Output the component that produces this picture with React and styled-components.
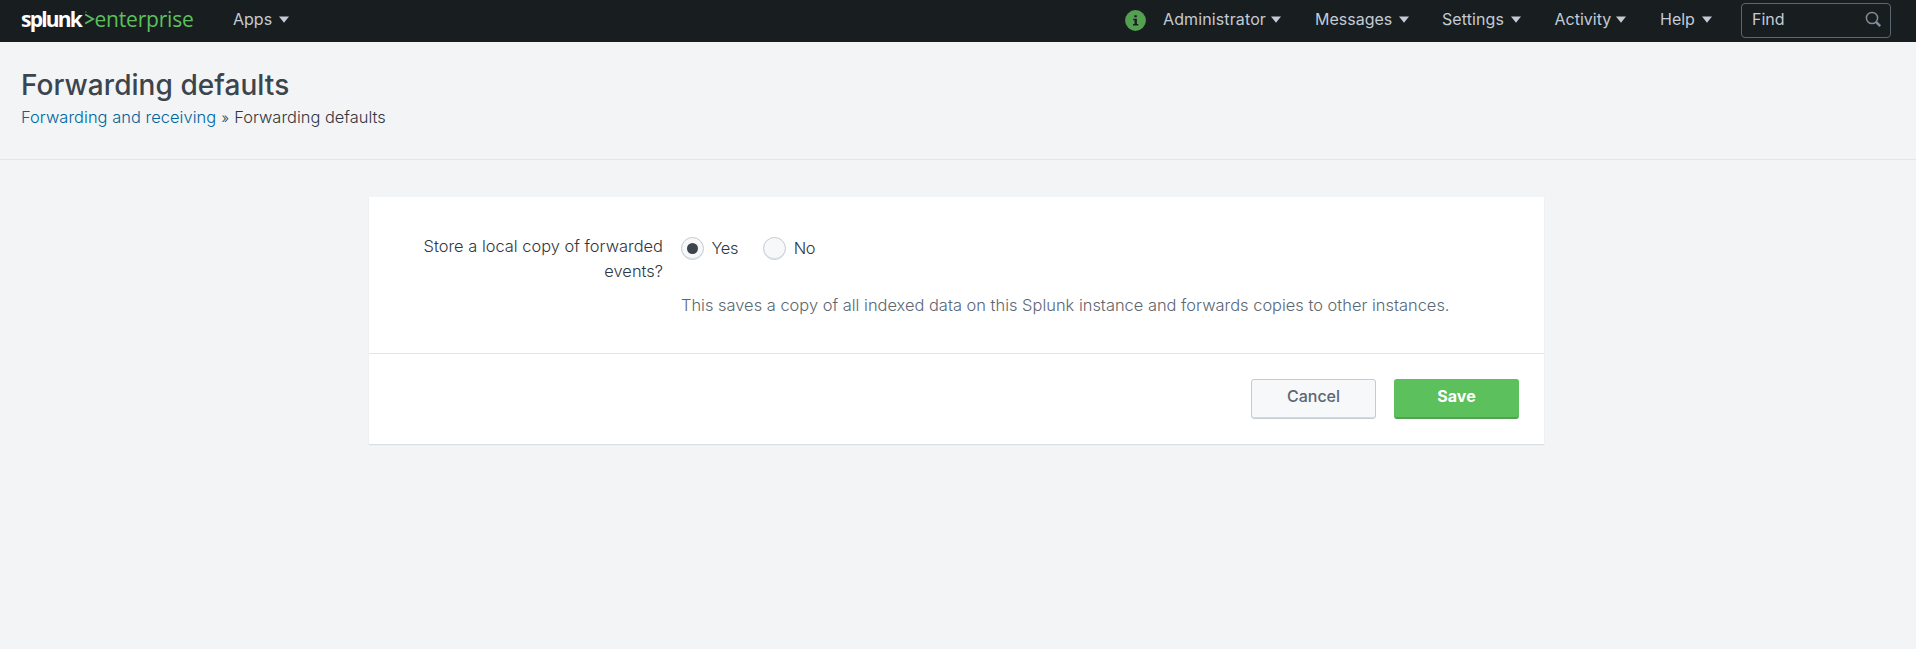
import React, { useState } from "react";
import styled, { createGlobalStyle, css } from "styled-components";

const GlobalStyle = createGlobalStyle`
  * { box-sizing: border-box; }
  body {
    margin: 0;
    background: #f2f4f5;
    color: #30373f;
    font-family: Inter, "Liberation Sans", sans-serif;
    font-size: 16.4px;
    font-weight: 300;
    letter-spacing: 0.02px;
  }
`;

const Page = styled.div`
  min-height: 100vh;
  display: flex;
  flex-direction: column;
`;

const NavBar = styled.header`
  display: flex;
  height: 42px;
  padding: 0 25px 0 21px;
  background: #181d20;
  color: #c3cbd4;
`;

const Logo = styled.div`
  display: flex;
  width: 212px;
  padding-top: 6px;
  font: 400 21px/26px "Open Sans", "Liberation Sans", sans-serif;
`;

const LogoName = styled.span`
  width: 62.5px;
  color: #fff;
  font-weight: 700;
  letter-spacing: -1.8px;
`;

const LogoChevron = styled.svg`
  flex: none;
  width: 11px;
  height: 20px;
`;

const LogoProduct = styled.span`
  color: #5cc05c;
  letter-spacing: -0.2px;
`;

const Menu = styled.a`
  display: flex;
  align-items: flex-start;
  width: ${(p) => p.$width}px;
  padding-top: 9px;
  font-size: 16px;
  font-weight: 400;
  line-height: 21px;
  cursor: pointer;
`;

const MenuLabel = styled.span`
  width: ${(p) => p.$width}px;
  letter-spacing: ${(p) => p.$spacing || 0}px;
  white-space: nowrap;
`;

const Caret = styled.svg`
  width: 10px;
  height: 7px;
  margin-top: 6.5px;
  fill: #c3cbd4;
`;

const NavRight = styled.nav`
  display: flex;
  margin-left: auto;
`;

const InfoIcon = styled.svg`
  width: 21px;
  height: 21px;
  margin: 9.5px 17.5px 0 0;
`;

const FindBox = styled.label`
  display: flex;
  width: 150px;
  height: 35px;
  margin-top: 3px;
  padding: 5px 8px 0 10px;
  border: 1px solid #5c6773;
  border-radius: 4px;
  font-size: 16px;
  font-weight: 400;
  line-height: 21px;
`;

const FindText = styled.span`
  flex: 1;
`;

const SearchIcon = styled.svg`
  width: 17px;
  height: 17px;
  margin-top: 2px;
`;

const TitleBar = styled.section`
  height: 118px;
  padding: 25px 21px 0;
  border-bottom: 1px solid #e1e6eb;
`;

const Title = styled.h1`
  margin: 0;
  color: #3c444d;
  font-size: 28px;
  font-weight: 500;
  line-height: 36px;
  letter-spacing: 0.05px;
`;

const Breadcrumb = styled.div`
  display: flex;
  gap: 6px;
  margin-top: 2px;
  line-height: 25px;
`;

const CrumbLink = styled.a`
  color: #0064a0;
  letter-spacing: 0.06px;
`;

const CrumbMark = styled.span`
  width: 6px;
  display: flex;
  justify-content: center;
  font-size: 14px;
`;

const Card = styled.main`
  width: 1175px;
  margin: 37px 0 0 369px;
  background: #fff;
  box-shadow: 0 1px 1px rgba(60, 80, 100, 0.13);
`;

const FormRow = styled.div`
  display: flex;
  gap: 18px;
  height: 156px;
  padding-top: 37px;
  line-height: 25px;
`;

const FieldLabel = styled.label`
  width: 294px;
  padding-left: 44px;
  text-align: right;
`;

const Options = styled.div`
  display: flex;
  gap: 25px;
  height: 30px;
  padding-top: 2px;
`;

const Option = styled.label`
  display: flex;
  gap: 7.5px;
  line-height: 25px;
  letter-spacing: -0.3px;
  cursor: pointer;
`;

const Radio = styled.span`
  display: grid;
  place-items: center;
  width: 23px;
  height: 23px;
  margin-top: 1px;
  border: 1px solid #c3cbd4;
  border-radius: 50%;
  background: #f7f8fa;
  box-shadow: inset 0 -1px 0 #dfe3e8;
  ${(p) =>
    p.$checked &&
    css`
      &::after {
        content: "";
        width: 11px;
        height: 11px;
        border-radius: 50%;
        background: #3c444d;
      }
    `}
`;

const Help = styled.p`
  margin: 29px 0 0;
  color: #5c6773;
  white-space: nowrap;
`;

const Actions = styled.footer`
  display: flex;
  justify-content: flex-end;
  gap: 18px;
  height: 91px;
  padding: 25px 25px 0 0;
  border-top: 1px solid #e1e6eb;
`;

const Button = styled.button`
  width: 125px;
  height: 40px;
  padding: 0 0 6px;
  border: 1px solid ${(p) => (p.$primary ? "#5cc05c" : "#c3cbd4")};
  border-bottom-color: ${(p) => (p.$primary ? "#53a051" : "#c3cbd4")};
  border-radius: 3px;
  background: ${(p) => (p.$primary ? "#5cc05c" : "#f7f8fa")};
  box-shadow: inset 0 -1px 0 ${(p) => (p.$primary ? "#53a051" : "#d5dbe1")};
  color: ${(p) => (p.$primary ? "#fff" : "#5c6773")};
  font-family: inherit;
  font-size: 16px;
  font-weight: ${(p) => (p.$primary ? 700 : 500)};
`;

function NavMenu({ label, width, labelWidth, spacing }) {
  return (
    <Menu $width={width}>
      <MenuLabel $width={labelWidth} $spacing={spacing}>{label}</MenuLabel>
      <Caret viewBox="0 0 10 7"><path d="M0 0.5h10L5 6.8z" /></Caret>
    </Menu>
  );
}

export default function App() {
  const [store, setStore] = useState("Yes");
  return (
    <Page>
      <GlobalStyle />
      <NavBar>
        <Logo>
          <LogoName>splunk</LogoName>
          <LogoChevron viewBox="0 0 11 20">
            <path d="M1.2 8.5L9.2 13L1.2 17.5" fill="none" stroke="#5cc05c" strokeWidth="1.7" />
            <path d="M1 6h1.8" stroke="#3f7d42" strokeWidth="1.2" />
          </LogoChevron>
          <LogoProduct>enterprise</LogoProduct>
        </Logo>
        <NavMenu label="Apps" width={60} labelWidth={46} />
        <NavRight>
          <InfoIcon viewBox="0 0 21 21">
            <circle cx="10.5" cy="10.5" r="10.4" fill="#53a051" />
            <path d="M9.3 5.3h2.5v2H9.3zM8.2 8.8h3.7v5.3h1.4v1.4H8v-1.4h1.5v-3.9H8.2z" fill="#1a1e22" />
          </InfoIcon>
          <NavMenu label="Administrator" width={152} labelWidth={108} spacing={0.12} />
          <NavMenu label="Messages" width={127} labelWidth={84} />
          <NavMenu label="Settings" width={112.5} labelWidth={68.5} spacing={0.1} />
          <NavMenu label="Activity" width={105.5} labelWidth={61} />
          <NavMenu label="Help" width={81} labelWidth={42} />
          <FindBox>
            <FindText>Find</FindText>
            <SearchIcon viewBox="0 0 17 17" fill="none" stroke="#818d99">
              <circle cx="7" cy="7" r="5.6" strokeWidth="1.5" />
              <path d="M11.2 11.2l4 3.9" strokeWidth="2.5" />
            </SearchIcon>
          </FindBox>
        </NavRight>
      </NavBar>
      <TitleBar>
        <Title>Forwarding defaults</Title>
        <Breadcrumb>
          <CrumbLink>Forwarding and receiving</CrumbLink>
          <CrumbMark>»</CrumbMark>
          <span>Forwarding defaults</span>
        </Breadcrumb>
      </TitleBar>
      <Card>
        <FormRow>
          <FieldLabel>Store a local copy of forwarded events?</FieldLabel>
          <div>
            <Options>
              {["Yes", "No"].map((o) => (
                <Option key={o} onClick={() => setStore(o)}>
                  <Radio $checked={store === o} />
                  {o}
                </Option>
              ))}
            </Options>
            <Help>This saves a copy of all indexed data on this Splunk instance and forwards copies to other instances.</Help>
          </div>
        </FormRow>
        <Actions>
          <Button>Cancel</Button>
          <Button $primary>Save</Button>
        </Actions>
      </Card>
    </Page>
  );
}
